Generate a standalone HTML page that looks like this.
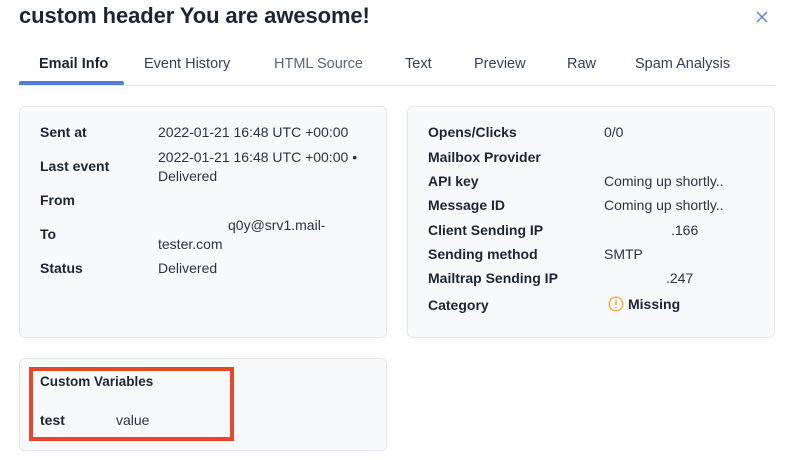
<!DOCTYPE html>
<html><head><style>
body{margin:0;width:792px;height:460px;background:#fff;font-family:"Liberation Sans",Arial,sans-serif;color:#1f2a3c;position:relative;overflow:hidden}
.a{position:absolute;white-space:nowrap}
h1{position:absolute;left:19px;top:3px;margin:0;font-size:22px;font-weight:bold;color:#1c2536;letter-spacing:-0.1px}
.tab{position:absolute;top:56px;font-size:14.5px;color:#334155}
.card{position:absolute;background:#f8f9fa;border:1px solid #e6e8eb;border-radius:6px}
.l{position:absolute;font-size:14px;font-weight:bold;color:#1c2536;white-space:nowrap}
.v{position:absolute;font-size:14px;color:#2a3344;white-space:nowrap;line-height:19px}
</style></head><body>
<h1>custom header You are awesome!</h1>
<svg class="a" style="left:756px;top:11px" width="12" height="12" viewBox="0 0 12 12"><path d="M1 1L11 11M11 1L1 11" stroke="#5b7fd6" stroke-width="1.4"/></svg>
<div class="tab" style="left:39px;color:#1c2536;font-weight:bold">Email Info</div>
<div class="tab" style="left:144px">Event History</div>
<div class="tab" style="left:274px;color:#5a6578">HTML Source</div>
<div class="tab" style="left:405px">Text</div>
<div class="tab" style="left:474px">Preview</div>
<div class="tab" style="left:567px">Raw</div>
<div class="tab" style="left:635px">Spam Analysis</div>
<div class="a" style="left:19px;top:85px;width:756px;height:1px;background:#e6e8eb"></div>
<div class="a" style="left:19px;top:81px;width:105px;height:4px;background:#4f7ddf;border-radius:2px 2px 0 0"></div>

<div class="card" style="left:19px;top:106px;width:366px;height:230px"></div>
<div class="l" style="left:40px;top:124px">Sent at</div><div class="v" style="left:158px;top:123px">2022-01-21 16:48 UTC +00:00</div>
<div class="l" style="left:40px;top:158px">Last event</div><div class="v" style="left:158px;top:148px">2022-01-21 16:48 UTC +00:00 •<br>Delivered</div>
<div class="l" style="left:40px;top:192px">From</div>
<div class="l" style="left:40px;top:226px">To</div><div class="v" style="left:158px;top:216px">&nbsp;&nbsp;&nbsp;&nbsp;&nbsp;&nbsp;&nbsp;&nbsp;&nbsp;&nbsp;&nbsp;&nbsp;&nbsp;&nbsp;&nbsp;&nbsp;&nbsp;&nbsp;q0y@srv1.mail-<br>tester.com</div>
<div class="l" style="left:40px;top:260px">Status</div><div class="v" style="left:158px;top:259px">Delivered</div>

<div class="card" style="left:407px;top:106px;width:366px;height:230px"></div>
<div class="l" style="left:428px;top:124px">Opens/Clicks</div><div class="v" style="left:604px;top:123px">0/0</div>
<div class="l" style="left:428px;top:149px">Mailbox Provider</div>
<div class="l" style="left:428px;top:173px">API key</div><div class="v" style="left:604px;top:172px">Coming up shortly..</div>
<div class="l" style="left:428px;top:197px">Message ID</div><div class="v" style="left:604px;top:196px">Coming up shortly..</div>
<div class="l" style="left:428px;top:222px">Client Sending IP</div><div class="v" style="left:671px;top:221px">.166</div>
<div class="l" style="left:428px;top:246px">Sending method</div><div class="v" style="left:604px;top:245px">SMTP</div>
<div class="l" style="left:428px;top:270px">Mailtrap Sending IP</div><div class="v" style="left:666px;top:269px">.247</div>
<div class="l" style="left:428px;top:297px">Category</div>
<svg class="a" style="left:608px;top:296px" width="16" height="16" viewBox="0 0 16 16"><circle cx="8" cy="8" r="6.8" fill="none" stroke="#f0a93a" stroke-width="1.4"/><path d="M8 4.2V9" stroke="#f0a93a" stroke-width="1.6"/><circle cx="8" cy="11.4" r="0.9" fill="#f0a93a"/></svg>
<div class="l" style="left:628px;top:296px">Missing</div>

<div class="card" style="left:19px;top:358px;width:366px;height:91px"></div>
<div class="a" style="left:29px;top:367px;width:197px;height:66px;border:4px solid #e8472b"></div>
<div class="l" style="left:40px;top:374px;font-size:13.5px">Custom Variables</div>
<div class="l" style="left:40px;top:412px">test</div><div class="v" style="left:116px;top:411px">value</div>
</body></html>
